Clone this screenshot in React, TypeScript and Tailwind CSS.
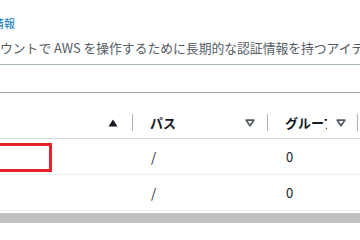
import React from "react";

function SortUp() {
  return (
    <svg width="10" height="8" viewBox="0 0 10 8" className="shrink-0">
      <path d="M0.5 7.5 L5 0.5 L9.5 7.5 Z" fill="#16191f" />
    </svg>
  );
}

function SortNone() {
  return (
    <svg width="10" height="8" viewBox="0 0 10 8" className="shrink-0">
      <path d="M1.2 1.2 L8.8 1.2 L5 6.8 Z" fill="none" stroke="#545b64" strokeWidth="1.7" strokeLinejoin="round" />
    </svg>
  );
}

function Divider() {
  return <div className="w-px h-[17px] bg-[#aab7b8] shrink-0" />;
}

const rows = [
  { path: "/", groups: "0" },
  { path: "/", groups: "0" },
];

export default function App() {
  return (
    <div className="w-[360px] h-[240px] overflow-hidden bg-white font-['Noto_Sans_CJK_JP',sans-serif] text-[#16191f]">
      {/* Info panel */}
      <div className="pt-[17px] border-b border-[#aab7b8] pb-[8px]">
        <div className="ml-[-29px] text-[11px] leading-[13px] text-[#0073bb] whitespace-nowrap">
          認証情報
        </div>
        <p className="mt-[10px] text-[12.8px] leading-[16px] text-[#545b64] whitespace-nowrap">
          ウントで AWS を操作するために長期的な認証情報を持つアイデンティティです。
        </p>
      </div>

      {/* Table */}
      <div className="mt-[27px] border-t border-[#a6a6a6]">
        <div className="flex h-[46px] pt-[14px] border-b border-[#d5dbdb] text-[13px] font-bold">
          <div className="w-[133px] flex items-center">
            <div className="flex-1" />
            <SortUp />
            <div className="w-[14px]" />
            <Divider />
          </div>
          <div className="w-[135px] flex items-center pl-[17px]">
            <span className="flex-1 whitespace-nowrap">パス</span>
            <SortNone />
            <div className="w-[12px]" />
            <Divider />
          </div>
          <div className="w-[90px] flex items-center pl-[17px]">
            <span className="w-[42px] overflow-hidden whitespace-nowrap">グループ</span>
            <div className="flex-1" />
            <SortNone />
            <div className="w-[11px]" />
            <Divider />
          </div>
        </div>

        {rows.map((row, i) => (
          <div key={i} className="relative flex h-[36px] items-center border-b border-[#eaeded] text-[13px]">
            <div className="w-[133px]" />
            <div className="w-[135px] pl-[18px]">{row.path}</div>
            <div className="w-[90px] pl-[18px]">{row.groups}</div>
            {i === 0 && (
              <div className="absolute left-[-3px] top-[4px] w-[55px] h-[29px] border-[3px] border-[#e8202a]" />
            )}
          </div>
        ))}

        {/* horizontal scrollbar */}
        <div className="mt-[2px] h-[10px] bg-[#c1c1c1]" />
      </div>
    </div>
  );
}
